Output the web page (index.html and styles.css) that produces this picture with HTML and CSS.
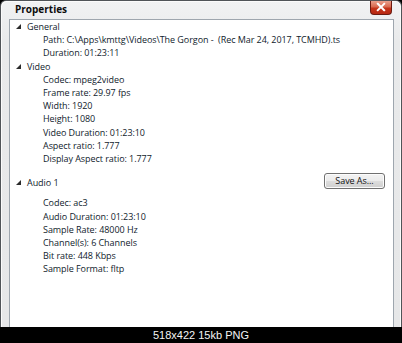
FILE: index.html
```html
<!DOCTYPE html>
<html>
<head>
<meta charset="utf-8">
<link rel="stylesheet" href="styles.css">
</head>
<body>
<div class="page">
  <div class="window">
    <div class="titlebar">
      <span class="title">Properties</span>
      <span class="close"><svg width="22" height="14" viewBox="0 0 22 14"><path d="M7.5 3.5 L14.5 10.5 M14.5 3.5 L7.5 10.5" stroke="#ffffff" stroke-width="2.2" stroke-linecap="square"/></svg></span>
    </div>
    <div class="panel">
      <div class="group">
        <div class="head"><span class="arrow"><svg width="5" height="5" viewBox="0 0 5 5"><polygon points="5,0 5,5 0,5" fill="#2b2b2b"/></svg></span>General</div>
        <div class="item">Path: C:\Apps\kmttg\Videos\The Gorgon -&nbsp; (Rec Mar 24, 2017, TCMHD).ts</div>
        <div class="item">Duration: 01:23:11</div>
      </div>
      <div class="group">
        <div class="head"><span class="arrow"><svg width="5" height="5" viewBox="0 0 5 5"><polygon points="5,0 5,5 0,5" fill="#2b2b2b"/></svg></span>Video</div>
        <div class="item">Codec: mpeg2video</div>
        <div class="item">Frame rate: 29.97 fps</div>
        <div class="item">Width: 1920</div>
        <div class="item">Height: 1080</div>
        <div class="item">Video Duration: 01:23:10</div>
        <div class="item">Aspect ratio: 1.777</div>
        <div class="item">Display Aspect ratio: 1.777</div>
      </div>
      <div class="group audio">
        <div class="head head-row"><span class="head-label"><span class="arrow"><svg width="5" height="5" viewBox="0 0 5 5"><polygon points="5,0 5,5 0,5" fill="#2b2b2b"/></svg></span>Audio 1</span><span class="btn">Save As...</span></div>
        <div class="items">
          <div class="item">Codec: ac3</div>
          <div class="item">Audio Duration: 01:23:10</div>
          <div class="item">Sample Rate: 48000 Hz</div>
          <div class="item">Channel(s): 6 Channels</div>
          <div class="item">Bit rate: 448 Kbps</div>
          <div class="item">Sample Format: fltp</div>
        </div>
      </div>
    </div>
  </div>
  <div class="caption">518x422 15kb PNG</div>
</div>
</body>
</html>
```
FILE: styles.css
```css
html, body {
  margin: 0;
  padding: 0;
  background: #000;
}
.page {
  width: 402px;
  height: 343px;
  overflow: hidden;
  display: flex;
  flex-direction: column;
  background: #000;
}
.window {
  box-sizing: border-box;
  width: 402px;
  height: 327px;
  border: 1px solid #505458;
  border-bottom: none;
  border-radius: 6px 6px 0 0;
  background: linear-gradient(to bottom, #f1f2f3 0px, #e9eaeb 40px, #e6e7e8 100%);
  display: flex;
  flex-direction: column;
  box-shadow: inset 1px 1px 0 #fbfbfb, inset -1px 0 0 #fbfbfb;
}
.titlebar {
  height: 18px;
  display: flex;
  justify-content: space-between;
  align-items: flex-start;
}
.title {
  font-family: "Open Sans", "Noto Sans", sans-serif;
  font-weight: bold;
  font-size: 10px;
  line-height: 16px;
  color: #0d0d0d;
  padding-left: 14px;
}
.close {
  width: 22px;
  height: 14px;
  margin-right: 9px;
  box-sizing: border-box;
  border: 1px solid #6b1a10;
  border-top: none;
  border-radius: 0 0 4px 4px;
  background: linear-gradient(to bottom, #eaa08c 0%, #d8694f 45%, #c4341a 55%, #b82812 100%);
  display: flex;
  align-items: center;
  justify-content: center;
}
.close svg {
  display: block;
  margin-top: -1px;
}
.panel {
  flex: 1;
  margin: 0 7px 0 8px;
  background: #fff;
  border: 1px solid #9ea6ae;
  border-bottom: none;
  font-family: "Open Sans", "Noto Sans", sans-serif;
  font-size: 9px;
  letter-spacing: -0.06px;
  line-height: 13.2px;
  color: #101b2c;
}
.head {
  display: flex;
  align-items: center;
  padding-left: 17px;
  position: relative;
}
.arrow {
  position: absolute;
  left: 6px;
  top: 4px;
  width: 5px;
  height: 5px;
  display: block;
}
.arrow svg {
  display: block;
}
.item {
  padding-left: 33px;
  white-space: nowrap;
}
.audio {
  margin-top: 10.8px;
}
.head-row {
  justify-content: space-between;
  height: 13.2px;
}
.head-label {
  display: block;
}
.btn {
  box-sizing: border-box;
  width: 61px;
  height: 16px;
  margin-right: 8px;
  margin-bottom: 3px;
  border: 1px solid #707070;
  border-radius: 3px;
  background: linear-gradient(to bottom, #f3f3f3 0%, #ebebeb 50%, #dddddd 51%, #cfcfcf 100%);
  box-shadow: inset 0 0 0 1px #fcfcfc;
  font-size: 9px;
  line-height: 14px;
  text-align: center;
  color: #111;
}
.items {
  margin-top: 7.1px;
}
.caption {
  height: 16px;
  line-height: 16px;
  text-align: center;
  font-family: "Liberation Sans", Arial, sans-serif;
  font-size: 11px;
  color: #f4f4f4;
  background: #000;
}
```
